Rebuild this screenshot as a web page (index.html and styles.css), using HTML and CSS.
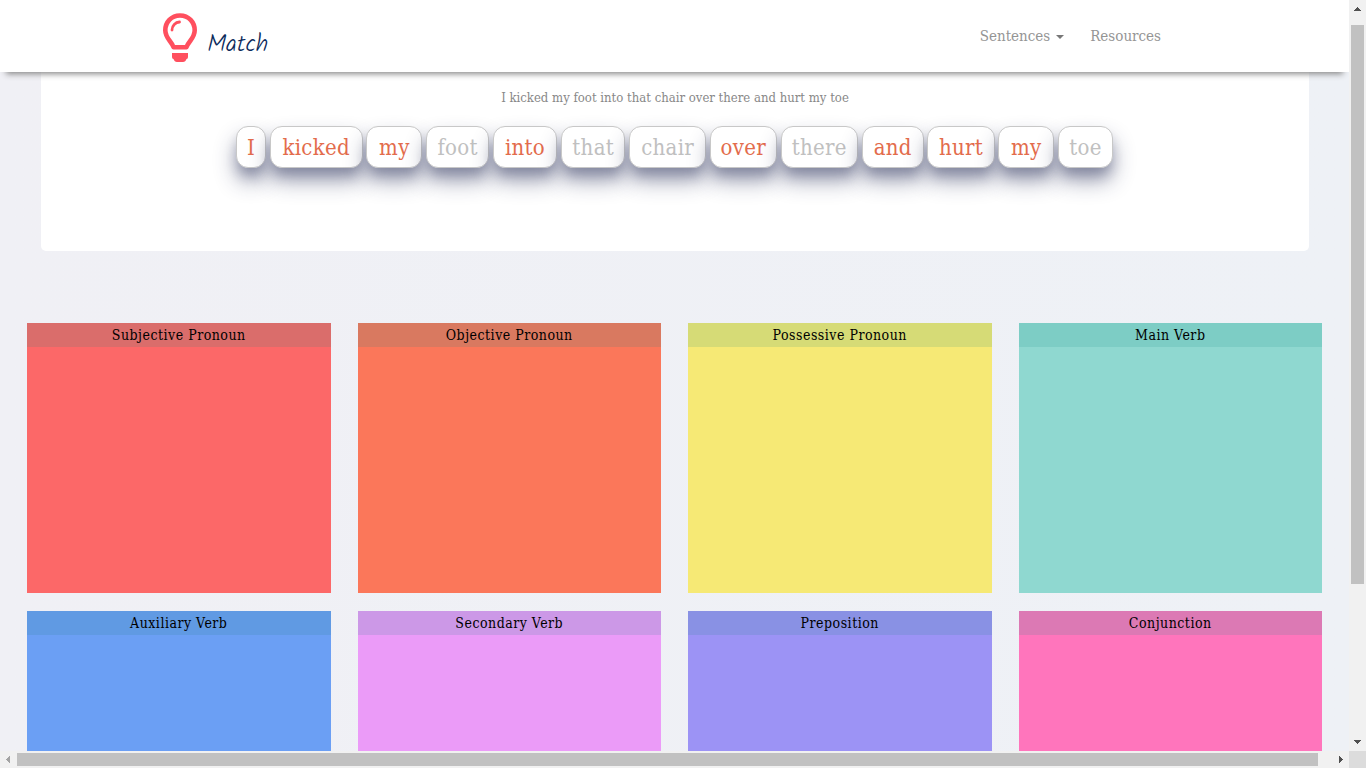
FILE: index.html
```html
<!DOCTYPE html>
<html lang="en">
<head>
<meta charset="utf-8">
<title>Match</title>
<link rel="stylesheet" href="styles.css">
</head>
<body>
<div class="window">
  <div class="page">
    <header class="navbar">
      <a class="brand">
        <svg class="bulb" viewBox="0 0 36 50" width="36" height="50">
          <path d="M18 2.500C9.200 2.500 3.300 9.300 3.300 17.300C3.300 25.500 9.700 28.200 11.500 34.200H24.500C26.300 28.200 32.700 25.500 32.700 17.300C32.700 9.300 26.800 2.500 18 2.500Z" fill="none" stroke="#ff4f5e" stroke-width="4.600" stroke-linejoin="round"/>
          <path d="M10 17C10 12.500 13.500 9.300 17.500 9" fill="none" stroke="#ff4f5e" stroke-width="2.800" stroke-linecap="round"/>
          <path d="M10 40H26V44Q26 46 24.500 46Q23.500 49 21 49H15Q12.500 49 11.500 46Q10 46 10 44Z" fill="#ff4f5e"/>
        </svg>
        <span class="brand-name">Match</span>
      </a>
      <nav class="links">
        <a class="link sentences"><span>Sentences</span><i class="caret"></i></a>
        <a class="link resources"><span>Resources</span></a>
      </nav>
    </header>
    <section class="card">
      <p class="sentence">I kicked my foot into that chair over there and hurt my toe</p>
      <div class="words">
        <span class="word w-i">I</span>
        <span class="word w-kicked">kicked</span>
        <span class="word w-my">my</span>
        <span class="word w-foot used">foot</span>
        <span class="word w-into">into</span>
        <span class="word w-that used">that</span>
        <span class="word w-chair used">chair</span>
        <span class="word w-over">over</span>
        <span class="word w-there used">there</span>
        <span class="word w-and">and</span>
        <span class="word w-hurt">hurt</span>
        <span class="word w-my">my</span>
        <span class="word w-toe used">toe</span>
      </div>
    </section>
    <main class="boxes">
      <div class="box red"><h2>Subjective Pronoun</h2></div>
      <div class="box orange"><h2>Objective Pronoun</h2></div>
      <div class="box yellow"><h2>Possessive Pronoun</h2></div>
      <div class="box teal"><h2>Main Verb</h2></div>
      <div class="box blue"><h2>Auxiliary Verb</h2></div>
      <div class="box violet"><h2>Secondary Verb</h2></div>
      <div class="box purple"><h2>Preposition</h2></div>
      <div class="box pink"><h2>Conjunction</h2></div>
    </main>
  </div>
  <div class="vbar">
    <svg width="17" height="17"><path d="M8 7h1v1h1v1h1v1h1v1H5v-1h1V9h1V8h1z" fill="#505050"/></svg>
    <div class="vthumb"></div>
    <svg class="end" width="17" height="17"><path d="M5 6h7v1h-1v1h-1v1H9v1H8V9H7V8H6V7H5z" fill="#505050"/></svg>
  </div>
  <div class="hbar">
    <svg width="17" height="17"><path d="M10 5v7H9v-1H8v-1H7V9H6V8h1V7h1V6h1V5z" fill="#a3a3a3"/></svg>
    <div class="hthumb"></div>
    <svg class="end" width="17" height="17"><path d="M7 5h1v1h1v1h1v1h1v1h-1v1H9v1H8v1H7z" fill="#505050"/></svg>
  </div>
  <div class="corner"></div>
</div>
</body>
</html>
```
FILE: styles.css
```css
* { box-sizing: border-box; }
body { margin: 0; font-family: "Roboto Slab", "DejaVu Serif Condensed", "DejaVu Serif", serif; font-stretch: condensed; overflow: hidden; }
.window { display: grid; grid-template: 751px 17px / 1349px 17px; width: 1366px; height: 768px; }
.page { overflow: hidden; background: linear-gradient(90deg, #f0f0f5, #eef1f6); }
.navbar { position: relative; z-index: 2; display: flex; justify-content: space-between; height: 72px; padding: 0 188px 0 162px; background: #fff; box-shadow: 0 8px 6px -6px #888; }
.brand { display: flex; gap: 9px; }
.bulb { margin-top: 13px; }
.brand-name { margin-top: 29px; font: 300 24px/32px "Kalam", "Open Sans", sans-serif; color: #0b2a5b; }
.links { display: flex; gap: 26px; }
.link { display: flex; align-items: center; height: 72px; font-size: 15px; font-weight: 300; color: #959595; white-space: nowrap; }
.caret { margin: 2px 0 0 6px; border: 4px solid transparent; border-top-color: #777; border-bottom: 0; }
.card { width: 1268px; height: 179px; margin-left: 41px; padding-top: 17px; background: #fff; border-radius: 0 0 5px 5px; }
.sentence { margin: 0; height: 18px; line-height: 18px; font-size: 13px; text-align: center; color: #888; }
.words { display: flex; gap: 3.700px; margin: 19px 0 0 195px; }
.word { flex: none; height: 42px; line-height: 42px; text-align: center; font-size: 22px; letter-spacing: .3px; color: #e36c4c; background: #fff; border: 1px solid #c8c8c8; border-radius: 12px; box-shadow: 0 13px 21px rgba(35, 42, 85, .43), 0 9px 12px -2px rgba(35, 42, 85, .25); }
.used { color: #c0c0c0; }
.w-i { width: 30px; }
.w-kicked { width: 93px; }
.w-my { width: 56px; }
.w-foot { width: 63px; }
.w-into { width: 64.500px; }
.w-that { width: 64.500px; }
.w-chair { width: 77px; }
.w-over { width: 67px; }
.w-there { width: 77.500px; }
.w-and { width: 62px; }
.w-hurt { width: 67.200px; }
.w-toe { width: 55px; }
.boxes { display: grid; grid-template-columns: repeat(4, 1fr); gap: 18px 27px; padding: 72px 27px 0; }
.box { height: 270px; }
.box h2 { margin: 0; height: 24px; line-height: 24px; font-size: 14px; letter-spacing: .5px; font-weight: 400; text-align: center; color: #000; }
.red { background: #fc6868; } .red h2 { background: #da6d6b; }
.orange { background: #fb775a; } .orange h2 { background: #d97960; }
.yellow { background: #f6e975; } .yellow h2 { background: #d6db76; }
.teal { background: #8fd8d0; } .teal h2 { background: #7dcdc5; }
.blue { background: #6b9ff4; } .blue h2 { background: #609ae3; }
.violet { background: #eb9bf8; } .violet h2 { background: #cc98e7; }
.purple { background: #9c93f5; } .purple h2 { background: #8991e4; }
.pink { background: #ff75bc; } .pink h2 { background: #dc79b4; }
.vbar { display: flex; flex-direction: column; background: #f1f1f1; }
.vthumb { width: 13px; height: 559px; margin: 8px 0 0 2px; background: #c1c1c1; }
.vbar .end { margin-top: auto; }
.hbar { display: flex; background: #f1f1f1; }
.hthumb { width: 1301px; height: 13px; margin-top: 2px; background: #c1c1c1; }
.hbar .end { margin-left: auto; }
.corner { background: #dcdcdc; }
```
